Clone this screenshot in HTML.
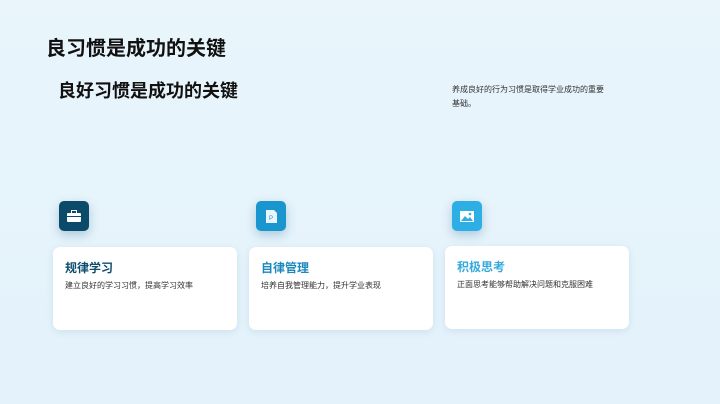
<!DOCTYPE html>
<html><head><meta charset="utf-8"><style>
*{margin:0;padding:0;box-sizing:border-box}
body{width:720px;height:404px;overflow:hidden;background:linear-gradient(180deg,#e9f5fb,#e3f2fb);font-family:"Liberation Sans","Noto Sans CJK SC",sans-serif;position:relative}
.a{position:absolute}
h1{position:absolute;left:46px;top:32px;font-size:20px;font-weight:bold;color:#111}
h2{position:absolute;left:58px;top:77px;font-size:18px;font-weight:bold;color:#111}
.d{left:452px;top:83px;width:170px;font-size:8px;line-height:14px;color:#333}
.ic{width:30px;height:30px;border-radius:5px;box-shadow:0 4px 10px rgba(0,80,130,.25);display:flex;align-items:center;justify-content:center}
.card{width:184px;height:83px;background:#fff;border-radius:7px;box-shadow:0 2px 8px rgba(0,80,130,.1);padding:12px 12px}
.card b{display:block;font-size:12px;color:#0e4d6e;margin-bottom:4px}
.card p{font-size:8px;color:#333}
</style></head><body>
<h1>良习惯是成功的关键</h1>
<h2>良好习惯是成功的关键</h2>
<div class="a d">养成良好的行为习惯是取得学业成功的重要<br>基础。</div>
<div class="a ic" style="left:59px;top:201px;background:#0c4a69"><svg width="14" height="12"><rect x="0" y="3" width="14" height="9" rx="1" fill="#fff"/><rect x="4.5" y="0.5" width="5" height="3" fill="none" stroke="#fff"/><rect x="0" y="6" width="14" height="1" fill="#0c4a69"/></svg></div>
<div class="a ic" style="left:256px;top:201px;background:#1a96cf"><svg width="11" height="13"><path d="M0 0h8l3 3v10H0z" fill="#e8f6fc"/><text x="3" y="10" font-size="6" fill="#1a96cf" font-family="Liberation Sans">P</text></svg></div>
<div class="a ic" style="left:452px;top:201px;background:#2daee5"><svg width="14" height="11"><rect width="14" height="11" fill="#fff"/><path d="M1 10L5 5l3 3 2-2 3 4z" fill="#2daee5"/><circle cx="10" cy="3" r="1.3" fill="#2daee5"/></svg></div>
<div class="a card" style="left:53px;top:247px"><b>规律学习</b><p>建立良好的学习习惯，提高学习效率</p></div>
<div class="a card" style="left:249px;top:247px"><b style="color:#1a88bd">自律管理</b><p>培养自我管理能力，提升学业表现</p></div>
<div class="a card" style="left:445px;top:246px"><b style="color:#36a9dc">积极思考</b><p>正面思考能够帮助解决问题和克服困难</p></div>
</body></html>
